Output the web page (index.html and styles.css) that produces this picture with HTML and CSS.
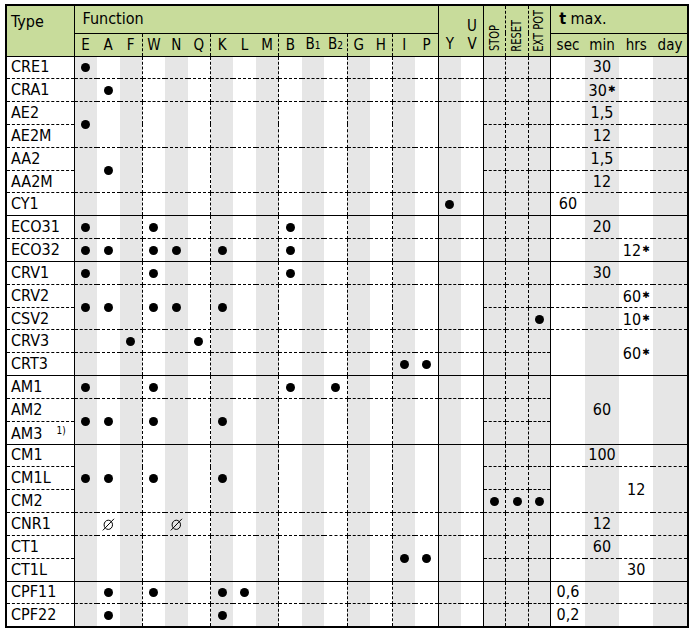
FILE: index.html
```html
<!DOCTYPE html>
<html>
<head>
<meta charset="utf-8">
<link rel="stylesheet" href="styles.css">
</head>
<body>
<table class="spec">
<colgroup>
<col class="ct">
<col class="cf g"><col class="cf"><col class="cf g"><col class="cf"><col class="cf g"><col class="cf"><col class="cf g"><col class="cf"><col class="cf g"><col class="cf"><col class="cf g"><col class="cf"><col class="cf g"><col class="cf"><col class="cf g"><col class="cf"><col class="cf g"><col class="cf">
<col class="cs g"><col class="cs g"><col class="cs g">
<col class="cm"><col class="cm g"><col class="cm"><col class="cm g">
</colgroup>
<thead>
<tr class="h1">
<th rowspan="2" class="type s">Type</th>
<th colspan="16" class="fn s">Function</th>
<th rowspan="2" class="yv">Y</th>
<th rowspan="2" class="yv s">U<br>V</th>
<th rowspan="2" class="rot d"><span>STOP</span></th>
<th rowspan="2" class="rot d"><span>RESET</span></th>
<th rowspan="2" class="rot s"><span>EXT POT</span></th>
<th colspan="4" class="tm"><b>t</b> max.</th>
</tr>
<tr class="h2">
<th>E</th><th>A</th><th class="d">F</th>
<th>W</th><th>N</th><th class="d">Q</th>
<th>K</th><th>L</th><th class="d">M</th>
<th>B</th><th>B<small>1</small></th><th class="d">B<small>2</small></th>
<th>G</th><th class="d">H</th>
<th>I</th><th class="s">P</th>
<th>sec</th><th>min</th><th>hrs</th><th>day</th>
</tr>
</thead>
<tbody>
<tr><th>CRE1</th>
<td><i class="dot"></i></td><td></td><td class="d"></td><td></td><td></td><td class="d"></td><td></td><td></td><td class="d"></td><td></td><td></td><td class="d"></td><td></td><td class="d"></td><td></td><td class="s"></td><td></td><td class="s"></td>
<td class="d"></td><td class="d"></td><td class="s"></td>
<td></td><td>30</td><td></td><td></td></tr>
<tr><th>CRA1</th>
<td></td><td><i class="dot"></i></td><td class="d"></td><td></td><td></td><td class="d"></td><td></td><td></td><td class="d"></td><td></td><td></td><td class="d"></td><td></td><td class="d"></td><td></td><td class="s"></td><td></td><td class="s"></td>
<td class="d"></td><td class="d"></td><td class="s"></td>
<td></td><td>30<span class="st">✱</span></td><td></td><td></td></tr>
<tr><th>AE2</th>
<td rowspan="2"><i class="dot"></i></td><td rowspan="2"></td><td rowspan="2" class="d"></td><td rowspan="2"></td><td rowspan="2"></td><td rowspan="2" class="d"></td><td rowspan="2"></td><td rowspan="2"></td><td rowspan="2" class="d"></td><td rowspan="2"></td><td rowspan="2"></td><td rowspan="2" class="d"></td><td rowspan="2"></td><td rowspan="2" class="d"></td><td rowspan="2"></td><td rowspan="2" class="s"></td><td rowspan="2"></td><td rowspan="2" class="s"></td>
<td class="d"></td><td class="d"></td><td class="s"></td>
<td></td><td>1,5</td><td></td><td></td></tr>
<tr><th>AE2M</th>
<td class="d"></td><td class="d"></td><td class="s"></td>
<td></td><td>12</td><td></td><td></td></tr>
<tr><th>AA2</th>
<td rowspan="2"></td><td rowspan="2"><i class="dot"></i></td><td rowspan="2" class="d"></td><td rowspan="2"></td><td rowspan="2"></td><td rowspan="2" class="d"></td><td rowspan="2"></td><td rowspan="2"></td><td rowspan="2" class="d"></td><td rowspan="2"></td><td rowspan="2"></td><td rowspan="2" class="d"></td><td rowspan="2"></td><td rowspan="2" class="d"></td><td rowspan="2"></td><td rowspan="2" class="s"></td><td rowspan="2"></td><td rowspan="2" class="s"></td>
<td class="d"></td><td class="d"></td><td class="s"></td>
<td></td><td>1,5</td><td></td><td></td></tr>
<tr><th>AA2M</th>
<td class="d"></td><td class="d"></td><td class="s"></td>
<td></td><td>12</td><td></td><td></td></tr>
<tr><th>CY1</th>
<td></td><td></td><td class="d"></td><td></td><td></td><td class="d"></td><td></td><td></td><td class="d"></td><td></td><td></td><td class="d"></td><td></td><td class="d"></td><td></td><td class="s"></td><td><i class="dot"></i></td><td class="s"></td>
<td class="d"></td><td class="d"></td><td class="s"></td>
<td>60</td><td></td><td></td><td></td></tr>
</tbody>
<tbody>
<tr><th>ECO31</th>
<td><i class="dot"></i></td><td></td><td class="d"></td><td><i class="dot"></i></td><td></td><td class="d"></td><td></td><td></td><td class="d"></td><td><i class="dot"></i></td><td></td><td class="d"></td><td></td><td class="d"></td><td></td><td class="s"></td><td></td><td class="s"></td>
<td class="d"></td><td class="d"></td><td class="s"></td>
<td></td><td>20</td><td></td><td></td></tr>
<tr><th>ECO32</th>
<td><i class="dot"></i></td><td><i class="dot"></i></td><td class="d"></td><td><i class="dot"></i></td><td><i class="dot"></i></td><td class="d"></td><td><i class="dot"></i></td><td></td><td class="d"></td><td><i class="dot"></i></td><td></td><td class="d"></td><td></td><td class="d"></td><td></td><td class="s"></td><td></td><td class="s"></td>
<td class="d"></td><td class="d"></td><td class="s"></td>
<td></td><td></td><td>12<span class="st">✱</span></td><td></td></tr>
</tbody>
<tbody>
<tr><th>CRV1</th>
<td><i class="dot"></i></td><td></td><td class="d"></td><td><i class="dot"></i></td><td></td><td class="d"></td><td></td><td></td><td class="d"></td><td><i class="dot"></i></td><td></td><td class="d"></td><td></td><td class="d"></td><td></td><td class="s"></td><td></td><td class="s"></td>
<td class="d"></td><td class="d"></td><td class="s"></td>
<td></td><td>30</td><td></td><td></td></tr>
<tr><th>CRV2</th>
<td rowspan="2"><i class="dot"></i></td><td rowspan="2"><i class="dot"></i></td><td rowspan="2" class="d"></td><td rowspan="2"><i class="dot"></i></td><td rowspan="2"><i class="dot"></i></td><td rowspan="2" class="d"></td><td rowspan="2"><i class="dot"></i></td><td rowspan="2"></td><td rowspan="2" class="d"></td><td rowspan="2"></td><td rowspan="2"></td><td rowspan="2" class="d"></td><td rowspan="2"></td><td rowspan="2" class="d"></td><td rowspan="2"></td><td rowspan="2" class="s"></td><td rowspan="2"></td><td rowspan="2" class="s"></td>
<td class="d"></td><td class="d"></td><td class="s"></td>
<td></td><td></td><td>60<span class="st">✱</span></td><td></td></tr>
<tr><th>CSV2</th>
<td class="d"></td><td class="d"></td><td class="s"><i class="dot"></i></td>
<td></td><td></td><td>10<span class="st">✱</span></td><td></td></tr>
<tr><th>CRV3</th>
<td></td><td></td><td class="d"><i class="dot"></i></td><td></td><td></td><td class="d"><i class="dot"></i></td><td></td><td></td><td class="d"></td><td></td><td></td><td class="d"></td><td></td><td class="d"></td><td></td><td class="s"></td><td></td><td class="s"></td>
<td class="d"></td><td class="d"></td><td class="s"></td>
<td rowspan="2"></td><td rowspan="2"></td><td rowspan="2">60<span class="st">✱</span></td><td rowspan="2"></td></tr>
<tr><th>CRT3</th>
<td></td><td></td><td class="d"></td><td></td><td></td><td class="d"></td><td></td><td></td><td class="d"></td><td></td><td></td><td class="d"></td><td></td><td class="d"></td><td><i class="dot"></i></td><td class="s"><i class="dot"></i></td><td></td><td class="s"></td>
<td class="d"></td><td class="d"></td><td class="s"></td></tr>
</tbody>
<tbody>
<tr><th>AM1</th>
<td><i class="dot"></i></td><td></td><td class="d"></td><td><i class="dot"></i></td><td></td><td class="d"></td><td></td><td></td><td class="d"></td><td><i class="dot"></i></td><td></td><td class="d"><i class="dot"></i></td><td></td><td class="d"></td><td></td><td class="s"></td><td></td><td class="s"></td>
<td class="d"></td><td class="d"></td><td class="s"></td>
<td rowspan="3"></td><td rowspan="3">60</td><td rowspan="3"></td><td rowspan="3"></td></tr>
<tr><th>AM2</th>
<td rowspan="2"><i class="dot"></i></td><td rowspan="2"><i class="dot"></i></td><td rowspan="2" class="d"></td><td rowspan="2"><i class="dot"></i></td><td rowspan="2"></td><td rowspan="2" class="d"></td><td rowspan="2"><i class="dot"></i></td><td rowspan="2"></td><td rowspan="2" class="d"></td><td rowspan="2"></td><td rowspan="2"></td><td rowspan="2" class="d"></td><td rowspan="2"></td><td rowspan="2" class="d"></td><td rowspan="2"></td><td rowspan="2" class="s"></td><td rowspan="2"></td><td rowspan="2" class="s"></td>
<td class="d"></td><td class="d"></td><td class="s"></td></tr>
<tr><th>AM3<span class="note">1)</span></th>
<td class="d"></td><td class="d"></td><td class="s"></td></tr>
</tbody>
<tbody>
<tr><th>CM1</th>
<td rowspan="3"><i class="dot"></i></td><td rowspan="3"><i class="dot"></i></td><td rowspan="3" class="d"></td><td rowspan="3"><i class="dot"></i></td><td rowspan="3"></td><td rowspan="3" class="d"></td><td rowspan="3"><i class="dot"></i></td><td rowspan="3"></td><td rowspan="3" class="d"></td><td rowspan="3"></td><td rowspan="3"></td><td rowspan="3" class="d"></td><td rowspan="3"></td><td rowspan="3" class="d"></td><td rowspan="3"></td><td rowspan="3" class="s"></td><td rowspan="3"></td><td rowspan="3" class="s"></td>
<td class="d"></td><td class="d"></td><td class="s"></td>
<td></td><td>100</td><td></td><td></td></tr>
<tr><th>CM1L</th>
<td class="d"></td><td class="d"></td><td class="s"></td>
<td rowspan="2"></td><td rowspan="2"></td><td rowspan="2">12</td><td rowspan="2"></td></tr>
<tr><th>CM2</th>
<td class="d"><i class="dot"></i></td><td class="d"><i class="dot"></i></td><td class="s"><i class="dot"></i></td></tr>
<tr><th>CNR1</th>
<td></td><td><svg class="ph" viewBox="0 0 13 13"><ellipse cx="6.3" cy="6.8" rx="4.2" ry="4.6"/><line x1="0.8" y1="12.4" x2="12" y2="0.8"/></svg></td><td class="d"></td><td></td><td><svg class="ph" viewBox="0 0 13 13"><ellipse cx="6.3" cy="6.8" rx="4.2" ry="4.6"/><line x1="0.8" y1="12.4" x2="12" y2="0.8"/></svg></td><td class="d"></td><td></td><td></td><td class="d"></td><td></td><td></td><td class="d"></td><td></td><td class="d"></td><td></td><td class="s"></td><td></td><td class="s"></td>
<td class="d"></td><td class="d"></td><td class="s"></td>
<td></td><td>12</td><td></td><td></td></tr>
<tr><th>CT1</th>
<td rowspan="2"></td><td rowspan="2"></td><td rowspan="2" class="d"></td><td rowspan="2"></td><td rowspan="2"></td><td rowspan="2" class="d"></td><td rowspan="2"></td><td rowspan="2"></td><td rowspan="2" class="d"></td><td rowspan="2"></td><td rowspan="2"></td><td rowspan="2" class="d"></td><td rowspan="2"></td><td rowspan="2" class="d"></td><td rowspan="2"><i class="dot"></i></td><td rowspan="2" class="s"><i class="dot"></i></td><td rowspan="2"></td><td rowspan="2" class="s"></td>
<td class="d"></td><td class="d"></td><td class="s"></td>
<td></td><td>60</td><td></td><td></td></tr>
<tr><th>CT1L</th>
<td class="d"></td><td class="d"></td><td class="s"></td>
<td></td><td></td><td>30</td><td></td></tr>
</tbody>
<tbody>
<tr><th>CPF11</th>
<td></td><td><i class="dot"></i></td><td class="d"></td><td><i class="dot"></i></td><td></td><td class="d"></td><td><i class="dot"></i></td><td><i class="dot"></i></td><td class="d"></td><td></td><td></td><td class="d"></td><td></td><td class="d"></td><td></td><td class="s"></td><td></td><td class="s"></td>
<td class="d"></td><td class="d"></td><td class="s"></td>
<td>0,6</td><td></td><td></td><td></td></tr>
<tr><th>CPF22</th>
<td></td><td><i class="dot"></i></td><td class="d"></td><td></td><td></td><td class="d"></td><td><i class="dot"></i></td><td></td><td class="d"></td><td></td><td></td><td class="d"></td><td></td><td class="d"></td><td></td><td class="s"></td><td></td><td class="s"></td>
<td class="d"></td><td class="d"></td><td class="s"></td>
<td>0,2</td><td></td><td></td><td></td></tr>
</tbody>
</table>
</body>
</html>
```
FILE: styles.css
```css
html, body {
  margin: 0;
  padding: 0;
  background: #fff;
}
body {
  font-family: "Liberation Sans Narrow", "DejaVu Sans Condensed", "Liberation Sans", sans-serif;
  color: #000;
}
.spec {
  border-collapse: collapse;
  table-layout: fixed;
  width: 681.5px;
  margin: 4px 0 0 5px;
  border: 2px solid #000;
}
.ct { width: 68px; }
.cf { width: 22.75px; }
.cs { width: 22.33px; }
.cm { width: 34.25px; }
col.g { background: #e6e6e6; }

.spec th, .spec td {
  padding: 0;
  border: none;
  border-bottom: 1px dashed #000;
  text-align: center;
  vertical-align: middle;
  font-weight: normal;
  font-size: 16px;
  line-height: 16px;
  white-space: nowrap;
}
.spec .d { border-right: 1px dashed #000; }
.spec .s { border-right: 1px solid #000; }

thead th { background: #c8dc9b; }
.spec thead th { border-bottom: 1px solid #000; }
.h1 { height: 28px; }
.h2 { height: 23px; }
.h2 th { font-size: 15px; }
.h2 small { font-size: 10px; }
.spec .type {
  text-align: left;
  vertical-align: top;
  padding: 8px 0 0 4px;
}
.spec .fn, .spec .tm {
  text-align: left;
  padding-left: 8px;
}
.tm b { font-weight: bold; }
.spec .yv {
  vertical-align: bottom;
  line-height: 18px;
  font-size: 15px;
  padding-bottom: 3px;
}
.spec .rot {
  vertical-align: bottom;
  padding-bottom: 4px;
  line-height: 0;
}
.rot span {
  display: block;
  width: 12px;
  margin: 0 auto;
  writing-mode: vertical-rl;
  transform: rotate(180deg) scaleX(1.3);
  font-size: 11px;
  line-height: 12px;
}

tbody { border-top: 1px solid #000; }
tbody tr { height: 22.84px; }
tbody th {
  text-align: left !important;
  padding-left: 4px !important;
  border-right: 1px solid #000 !important;
}
.dot {
  display: inline-block;
  width: 9px;
  height: 9px;
  border-radius: 50%;
  background: #000;
  vertical-align: middle;
}
.st {
  font-family: "DejaVu Sans", sans-serif;
  font-size: 9px;
  vertical-align: 4px;
  margin-left: 1px;
}
.note {
  display: inline-block;
  font-size: 10px;
  margin-left: 14px;
  vertical-align: 5px;
}
.ph {
  width: 13px;
  height: 13px;
  vertical-align: middle;
  fill: none;
  stroke: #000;
  stroke-width: 1;
}
```
